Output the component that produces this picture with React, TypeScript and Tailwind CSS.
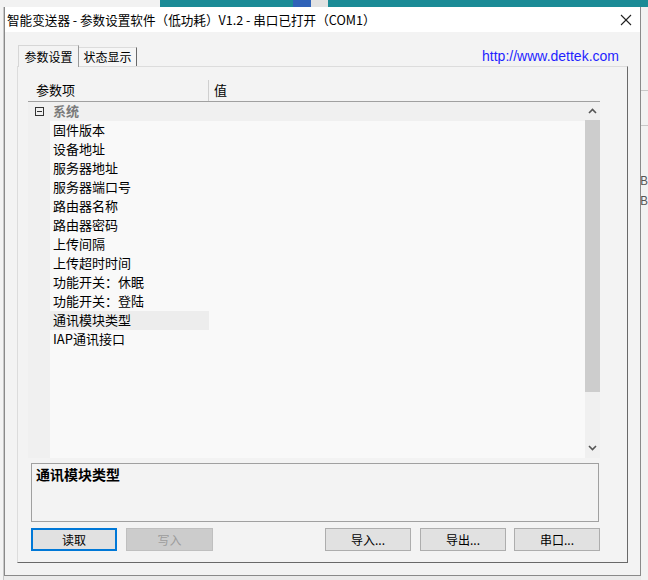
import React from "react";

const items = [
  "固件版本",
  "设备地址",
  "服务器地址",
  "服务器端口号",
  "路由器名称",
  "路由器密码",
  "上传间隔",
  "上传超时时间",
  "功能开关：休眠",
  "功能开关：登陆",
  "通讯模块类型",
  "IAP通讯接口",
];

function Chevron({ up }: { up?: boolean }) {
  return (
    <svg width="9" height="6" viewBox="0 0 9 6" className="block">
      {up ? (
        <polyline points="1,5 4.5,1.5 8,5" fill="none" stroke="#555" strokeWidth="1.6" />
      ) : (
        <polyline points="1,1 4.5,4.5 8,1" fill="none" stroke="#555" strokeWidth="1.6" />
      )}
    </svg>
  );
}

export default function App() {
  return (
    <div className="relative w-[648px] h-[580px] overflow-hidden bg-[#ebebeb] font-['Noto_Sans_CJK_SC','Noto_Sans',sans-serif] text-black">
      {/* desktop behind window */}
      <div className="absolute left-0 top-0 w-[648px] h-[7px] flex">
        <div className="w-[160px] h-full bg-[#f2f2f2]" />
        <div className="w-[133px] h-full bg-[#1b8b96]" />
        <div className="w-[18px] h-full bg-[#2f62b8]" />
        <div className="w-[17px] h-full bg-[#e2e2e2]" />
        <div className="flex-1 h-full bg-[#1b8b96]" />
      </div>
      <div className="absolute left-0 top-[7px] w-[4px] h-[573px] bg-[#f3f3f3] border-r border-[#c8c8c8]" />
      <div className="absolute left-[641px] top-[7px] w-[7px] h-[573px] bg-[#f2f2f2] flex flex-col">
        <div className="h-[24px]" />
        <div className="h-[60px] border-b border-[#c8c8c8]" />
        <div className="h-[35px] border-b border-[#c8c8c8]" />
        <div className="h-[44px]" />
        <div className="text-[12px] leading-[20px] text-[#555] -ml-[1px]">B</div>
        <div className="text-[12px] leading-[20px] text-[#555] -ml-[1px]">B</div>
      </div>

      {/* window */}
      <div className="absolute left-[4px] top-[7px] w-[637px] h-[569px] flex flex-col border-x border-b border-[#8a8a8a] bg-[#f3f3f3]">
        {/* title bar */}
        <div className="h-[25px] bg-white flex items-center pl-[2px] pr-[8px]">
          <span className="text-[12.6px] leading-[24px] whitespace-nowrap">
            智能变送器 - 参数设置软件（低功耗）V1.2 - 串口已打开（COM1）
          </span>
          <svg width="12" height="12" viewBox="0 0 12 12" className="ml-auto mt-[1px]">
            <line x1="1" y1="1" x2="11" y2="11" stroke="#222" strokeWidth="1.1" />
            <line x1="11" y1="1" x2="1" y2="11" stroke="#222" strokeWidth="1.1" />
          </svg>
        </div>

        {/* body */}
        <div className="flex-1 flex flex-col pl-[12px] pr-[12px] pt-[13px] pb-[12px]">
          {/* tab strip */}
          <div className="h-[21px] flex items-end">
            <div className="relative z-10 -mb-px ml-[1px] w-[61px] h-[22px] bg-[#f3f3f3] border-l border-t border-r border-l-[#d6d6d6] border-t-[#d6d6d6] border-r-[#9a9a9a] flex items-center justify-center text-[12px]">
              参数设置
            </div>
            <div className="w-[58px] h-[19px] bg-[#f6f6f6] border-t border-r border-t-[#dcdcdc] border-r-[#696969] flex items-center justify-center text-[12px]">
              状态显示
            </div>
            <div className="ml-auto mr-[9px] self-center text-[14px] leading-[16px] text-[#1f1fff] font-['Liberation_Sans',sans-serif]">
              http://www.dettek.com
            </div>
          </div>

          {/* panel */}
          <div className="flex-1 flex flex-col border-t border-l border-r border-b border-t-[#dcdcdc] border-l-[#dcdcdc] border-r-[#696969] border-b-[#696969] pl-[10px] pr-[27px] pt-[13px] pb-[11px]">
            {/* property grid */}
            <div className="flex flex-col">
              <div className="h-[22px] flex border-b border-[#a0a0a0] text-[13px] leading-[20px]">
                <div className="w-[181px] pl-[8px] flex items-start border-r border-[#cfcfcf]">参数项</div>
                <div className="flex-1 pl-[5px] flex items-start">值</div>
              </div>
              <div className="h-[356px] flex">
                <div className="flex-1 flex flex-col">
                  {/* category row */}
                  <div className="h-[19px] flex items-center bg-[#f0f0f0]">
                    <div className="w-[22px] pl-[7px] flex items-center">
                      <div className="w-[9px] h-[9px] border border-[#333] flex items-center justify-center">
                        <div className="w-[5px] h-px bg-[#333]" />
                      </div>
                    </div>
                    <div className="pl-[3px] text-[13px] leading-[18px] h-[19px] font-bold text-[#7a7a7a]">系统</div>
                  </div>
                  {items.map((t) => (
                    <div key={t} className="h-[19px] flex">
                      <div className="w-[22px] bg-[#f0f0f0]" />
                      <div
                        className={
                          t === "通讯模块类型"
                            ? "w-[159px] pl-[3px] text-[13px] leading-[18px] whitespace-nowrap bg-[#ededed]"
                            : "w-[159px] pl-[3px] text-[13px] leading-[18px] whitespace-nowrap bg-[#f9f9f9]"
                        }
                      >
                        {t}
                      </div>
                      <div className="flex-1 bg-[#f9f9f9]" />
                    </div>
                  ))}
                  <div className="flex-1 flex">
                    <div className="w-[22px] bg-[#f0f0f0]" />
                    <div className="flex-1 bg-[#f9f9f9]" />
                  </div>
                </div>
                {/* scrollbar */}
                <div className="w-[15px] flex flex-col bg-[#f0f0f0]">
                  <div className="h-[18px] flex items-center justify-center">
                    <Chevron up />
                  </div>
                  <div className="h-[272px] bg-[#cdcdcd]" />
                  <div className="flex-1" />
                  <div className="h-[20px] flex items-center justify-center">
                    <Chevron />
                  </div>
                </div>
              </div>
            </div>

            {/* description */}
            <div className="mt-[5px] ml-[3px] mr-[1px] h-[59px] border border-[#a0a0a0] px-[4px] pt-[1px]">
              <div className="text-[14px] leading-[18px] font-bold">通讯模块类型</div>
            </div>

            {/* buttons */}
            <div className="mt-[6px] ml-[3px] h-[23px] flex text-[12px]">
              <button className="w-[86px] h-full bg-[#e1e1e1] border-2 border-[#0078d7] flex items-center justify-center">
                读取
              </button>
              <button className="ml-[9px] w-[87px] h-full bg-[#cccccc] border border-[#bfbfbf] text-[#9c9c9c] flex items-center justify-center">
                写入
              </button>
              <button className="ml-auto w-[86px] h-full bg-[#e1e1e1] border border-[#adadad] flex items-center justify-center">
                导入...
              </button>
              <button className="ml-[9px] w-[86px] h-full bg-[#e1e1e1] border border-[#adadad] flex items-center justify-center">
                导出...
              </button>
              <button className="ml-[8px] w-[86px] h-full bg-[#e1e1e1] border border-[#adadad] flex items-center justify-center">
                串口...
              </button>
            </div>
          </div>
        </div>
      </div>
    </div>
  );
}
